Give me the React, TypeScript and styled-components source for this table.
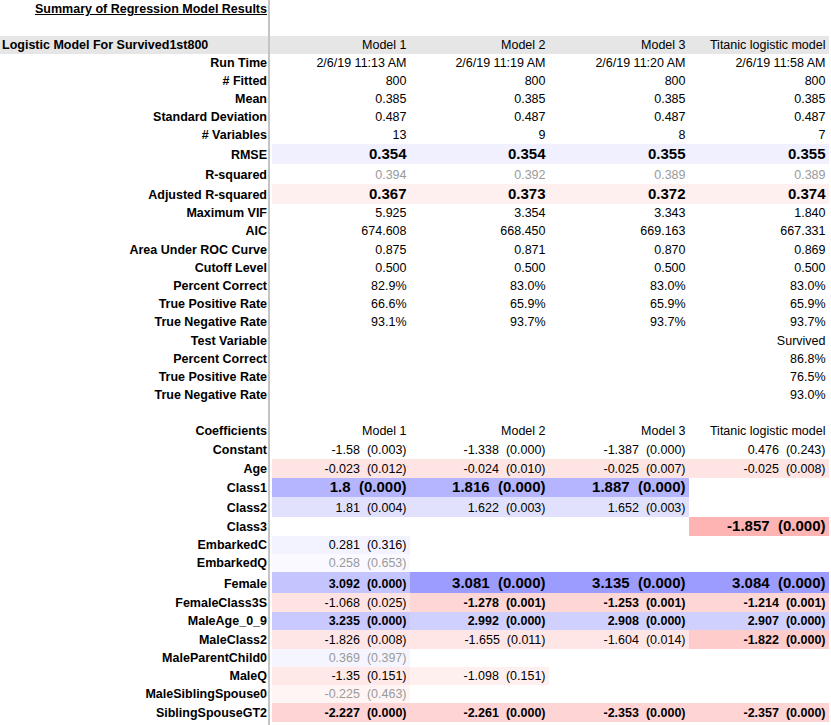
import React from "react";
import styled, { createGlobalStyle } from "styled-components";

const Global = createGlobalStyle`
  html, body { margin: 0; padding: 0; background: #ffffff; }
  body { font-family: "Liberation Sans", Arial, sans-serif; color: #000; }
`;

type Cell = {
  v?: string;
  bg?: string;
  big?: boolean;
  bold?: boolean;
  muted?: boolean;
};

type RowSpec = {
  label: string;
  h: number;
  cells: Cell[];
  header?: boolean;
};

const Sheet = styled.div`
  width: 831px;
  display: flex;
  flex-direction: column;
`;

const Row = styled.div<{ $h: number; $bg?: string }>`
  display: flex;
  height: ${(p) => p.$h}px;
  width: 829px;
  background: ${(p) => p.$bg || "transparent"};
`;

const Label = styled.div<{ $left?: boolean }>`
  box-sizing: border-box;
  flex: none;
  width: 270px;
  margin-right: 2px;
  border-right: 2px solid #c4c4c4;
  display: flex;
  align-items: flex-end;
  justify-content: ${(p) => (p.$left ? "flex-start" : "flex-end")};
  padding: ${(p) => (p.$left ? "0 0 2px 2px" : "0 1px 2px 0")};
  font-size: 12.5px;
  line-height: 14px;
  font-weight: bold;
  white-space: nowrap;
`;

const Title = styled.span`
  text-decoration: underline;
  text-underline-offset: 1px;
`;

const Value = styled.div<{
  $w: number;
  $bg?: string;
  $big?: boolean;
  $bold?: boolean;
  $muted?: boolean;
}>`
  box-sizing: border-box;
  flex: none;
  width: ${(p) => p.$w}px;
  display: flex;
  align-items: flex-end;
  justify-content: flex-end;
  padding: 0 3.5px 2px 0;
  background: ${(p) => p.$bg || "transparent"};
  font-size: ${(p) => (p.$big ? "15px" : "12.5px")};
  line-height: ${(p) => (p.$big ? "17px" : "14px")};
  font-weight: ${(p) => (p.$big || p.$bold ? "bold" : "normal")};
  color: ${(p) => (p.$muted ? "#9a9a9a" : "#000")};
  white-space: pre;
`;

const widths = [138, 139, 140, 140];

const same = (v: string, extra: Partial<Cell> = {}): Cell[] =>
  [0, 1, 2, 3].map(() => ({ v, ...extra }));
const four = (vals: string[], extra: Partial<Cell> = {}): Cell[] =>
  vals.map((v) => ({ v, ...extra }));
const c = (v: string, p: string, extra: Partial<Cell> = {}): Cell => ({
  v: `${v}  (${p})`,
  ...extra,
});
const E: Cell = {};

const rows: RowSpec[] = [
  { label: "Run Time", h: 18, cells: four(["2/6/19 11:13 AM", "2/6/19 11:19 AM", "2/6/19 11:20 AM", "2/6/19 11:58 AM"]) },
  { label: "# Fitted", h: 18, cells: same("800") },
  { label: "Mean", h: 18, cells: same("0.385") },
  { label: "Standard Deviation", h: 18, cells: same("0.487") },
  { label: "# Variables", h: 18, cells: four(["13", "9", "8", "7"]) },
  { label: "RMSE", h: 20, cells: four(["0.354", "0.354", "0.355", "0.355"], { big: true, bg: "#f0f0ff" }) },
  { label: "R-squared", h: 20, cells: four(["0.394", "0.392", "0.389", "0.389"], { muted: true }) },
  { label: "Adjusted R-squared", h: 20, cells: four(["0.367", "0.373", "0.372", "0.374"], { big: true, bg: "#fff0f0" }) },
  { label: "Maximum VIF", h: 18.2, cells: four(["5.925", "3.354", "3.343", "1.840"]) },
  { label: "AIC", h: 18.2, cells: four(["674.608", "668.450", "669.163", "667.331"]) },
  { label: "Area Under ROC Curve", h: 18.2, cells: four(["0.875", "0.871", "0.870", "0.869"]) },
  { label: "Cutoff Level", h: 18.2, cells: same("0.500") },
  { label: "Percent Correct", h: 18.2, cells: four(["82.9%", "83.0%", "83.0%", "83.0%"]) },
  { label: "True Positive Rate", h: 18.2, cells: four(["66.6%", "65.9%", "65.9%", "65.9%"]) },
  { label: "True Negative Rate", h: 18.2, cells: four(["93.1%", "93.7%", "93.7%", "93.7%"]) },
  { label: "Test Variable", h: 18.2, cells: [E, E, E, { v: "Survived" }] },
  { label: "Percent Correct", h: 18.2, cells: [E, E, E, { v: "86.8%" }] },
  { label: "True Positive Rate", h: 18.2, cells: [E, E, E, { v: "76.5%" }] },
  { label: "True Negative Rate", h: 18.2, cells: [E, E, E, { v: "93.0%" }] },
  { label: "", h: 18.2, cells: [E, E, E, E] },
  { label: "Coefficients", h: 18.2, cells: four(["Model 1", "Model 2", "Model 3", "Titanic logistic model"]) },
  {
    label: "Constant",
    h: 18.2,
    cells: [c("-1.58", "0.003"), c("-1.338", "0.000"), c("-1.387", "0.000"), c("0.476", "0.243")],
  },
  {
    label: "Age",
    h: 19,
    cells: [
      c("-0.023", "0.012", { bg: "#ffe4e4" }),
      c("-0.024", "0.010", { bg: "#ffe4e4" }),
      c("-0.025", "0.007", { bg: "#ffe4e4" }),
      c("-0.025", "0.008", { bg: "#ffe4e4" }),
    ],
  },
  {
    label: "Class1",
    h: 19.5,
    cells: [
      c("1.8", "0.000", { big: true, bg: "#b4b4ff" }),
      c("1.816", "0.000", { big: true, bg: "#b4b4ff" }),
      c("1.887", "0.000", { big: true, bg: "#b4b4ff" }),
      E,
    ],
  },
  {
    label: "Class2",
    h: 19.5,
    cells: [
      c("1.81", "0.004", { bg: "#e1e1fd" }),
      c("1.622", "0.003", { bg: "#e1e1fd" }),
      c("1.652", "0.003", { bg: "#e1e1fd" }),
      E,
    ],
  },
  {
    label: "Class3",
    h: 19,
    cells: [E, E, E, c("-1.857", "0.000", { big: true, bg: "#ffb4b4" })],
  },
  { label: "EmbarkedC", h: 18.5, cells: [c("0.281", "0.316", { bg: "#f3f3ff" }), E, E, E] },
  { label: "EmbarkedQ", h: 18, cells: [c("0.258", "0.653", { bg: "#f9f9ff", muted: true }), E, E, E] },
  {
    label: "Female",
    h: 20.5,
    cells: [
      c("3.092", "0.000", { bold: true, bg: "#c4c4ff" }),
      c("3.081", "0.000", { big: true, bg: "#9c9cff" }),
      c("3.135", "0.000", { big: true, bg: "#9c9cff" }),
      c("3.084", "0.000", { big: true, bg: "#9c9cff" }),
    ],
  },
  {
    label: "FemaleClass3S",
    h: 19,
    cells: [
      c("-1.068", "0.025", { bg: "#ffe3e3" }),
      c("-1.278", "0.001", { bold: true, bg: "#ffd6d6" }),
      c("-1.253", "0.001", { bold: true, bg: "#ffd6d6" }),
      c("-1.214", "0.001", { bold: true, bg: "#ffd6d6" }),
    ],
  },
  {
    label: "MaleAge_0_9",
    h: 18,
    cells: [
      c("3.235", "0.000", { bold: true, bg: "#c9c9ff" }),
      c("2.992", "0.000", { bold: true, bg: "#d0d0ff" }),
      c("2.908", "0.000", { bold: true, bg: "#d0d0ff" }),
      c("2.907", "0.000", { bold: true, bg: "#d0d0ff" }),
    ],
  },
  {
    label: "MaleClass2",
    h: 19,
    cells: [
      c("-1.826", "0.008", { bg: "#ffe6e6" }),
      c("-1.655", "0.011", { bg: "#ffe6e6" }),
      c("-1.604", "0.014", { bg: "#ffe6e6" }),
      c("-1.822", "0.000", { bold: true, bg: "#ffcccc" }),
    ],
  },
  { label: "MaleParentChild0", h: 18, cells: [c("0.369", "0.397", { bg: "#f5f5ff", muted: true }), E, E, E] },
  {
    label: "MaleQ",
    h: 18.5,
    cells: [c("-1.35", "0.151", { bg: "#ffe8e8" }), c("-1.098", "0.151", { bg: "#fff0f0" }), E, E],
  },
  { label: "MaleSiblingSpouse0", h: 18, cells: [c("-0.225", "0.463", { bg: "#fff5f5", muted: true }), E, E, E] },
  {
    label: "SiblingSpouseGT2",
    h: 19,
    cells: [
      c("-2.227", "0.000", { bold: true, bg: "#ffd4d4" }),
      c("-2.261", "0.000", { bold: true, bg: "#ffd4d4" }),
      c("-2.353", "0.000", { bold: true, bg: "#ffd4d4" }),
      c("-2.357", "0.000", { bold: true, bg: "#ffd4d4" }),
    ],
  },
];

const Cells: React.FC<{ cells: Cell[] }> = ({ cells }) => (
  <>
    {cells.map((cell, i) => (
      <Value
        key={i}
        $w={widths[i]}
        $bg={cell.bg}
        $big={cell.big}
        $bold={cell.bold}
        $muted={cell.muted}
      >
        {cell.v || ""}
      </Value>
    ))}
  </>
);

export default function App() {
  return (
    <>
      <Global />
      <Sheet>
        <Row $h={18}>
          <Label>
            <Title>Summary of Regression Model Results</Title>
          </Label>
        </Row>
        <Row $h={18}>
          <Label />
        </Row>
        <Row $h={18} $bg="#e6e6e6">
          <Label $left>Logistic Model For Survived1st800</Label>
          <Cells cells={four(["Model 1", "Model 2", "Model 3", "Titanic logistic model"])} />
        </Row>
        {rows.map((r, i) => (
          <Row key={i} $h={r.h}>
            <Label>{r.label}</Label>
            <Cells cells={r.cells} />
          </Row>
        ))}
        <Row $h={3}>
          <Label />
        </Row>
      </Sheet>
    </>
  );
}
